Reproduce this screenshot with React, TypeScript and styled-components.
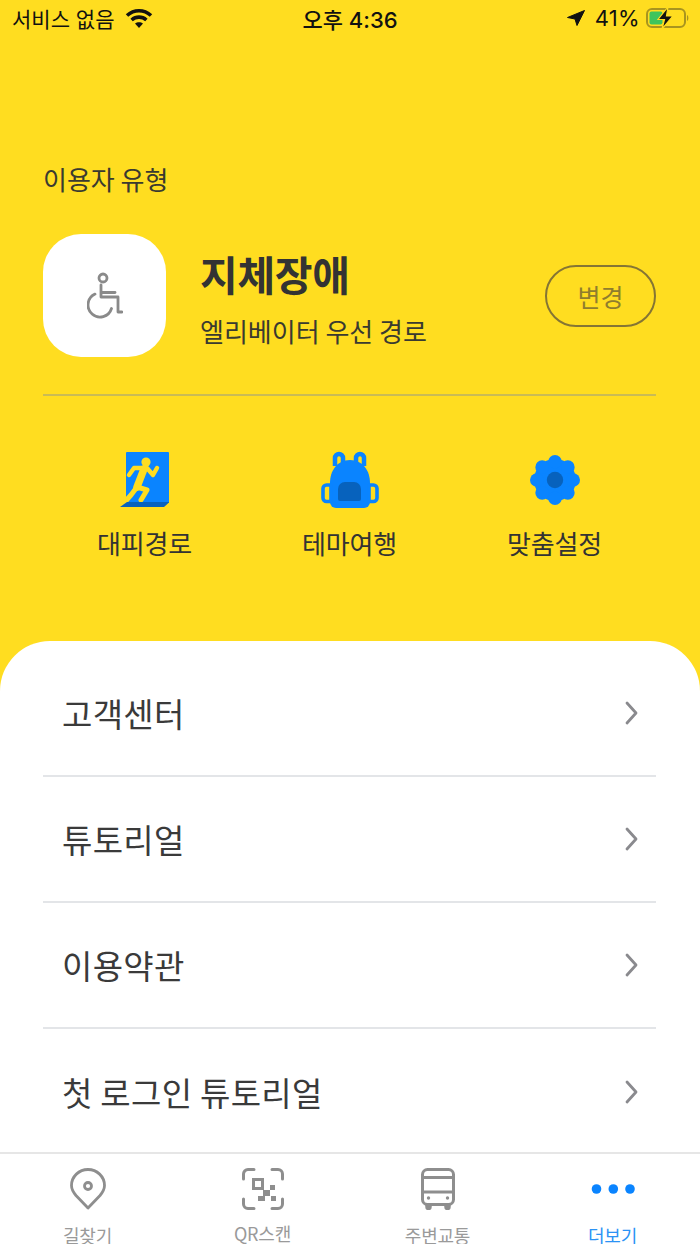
import React from "react";
import styled, { createGlobalStyle } from "styled-components";

const Global = createGlobalStyle`
  html, body { margin: 0; padding: 0; background: #fff; }
  * { box-sizing: border-box; }
  body { font-family: "Noto Sans CJK KR", "Noto Sans", sans-serif; }
`;

const Screen = styled.div`
  width: 700px;
  height: 1244px;
  display: flex;
  flex-direction: column;
  overflow: hidden;
  background: #ffdd20;
  color: #333;
`;

const StatusBar = styled.div`
  height: 40px;
  flex: none;
  display: grid;
  grid-template-columns: 1fr auto 1fr;
  align-items: center;
  padding: 0 10px 4px 12px;
  font-family: "Inter", "Noto Sans CJK KR", sans-serif;
  font-size: 21px;
  color: #111;
`;

const StatusLeft = styled.div`
  display: flex;
  align-items: center;
  gap: 10px;
`;

const StatusTime = styled.div`
  font-size: 22px;
  font-weight: 500;
  margin-left: -2px;
`;

const StatusRight = styled.div`
  display: flex;
  align-items: center;
  justify-content: flex-end;
  gap: 10px;
`;

const BatteryPercent = styled.span`
  font-size: 22px;
  letter-spacing: 0.3px;
  margin-right: -4px;
`;

const Hero = styled.section`
  flex: none;
  height: 601px;
  padding: 121px 44px 0 43px;
  display: flex;
  flex-direction: column;
`;

const Caption = styled.div`
  font-size: 26px;
  line-height: 36px;
  color: #3a3a30;
`;

const ProfileRow = styled.div`
  margin-top: 37px;
  padding-bottom: 37px;
  display: flex;
  align-items: center;
  border-bottom: 2px solid #c9bb55;
`;

const AvatarTile = styled.div`
  width: 123px;
  height: 123px;
  flex: none;
  border-radius: 38px;
  background: #fff;
  display: flex;
  align-items: center;
  justify-content: center;
`;

const ProfileText = styled.div`
  margin-left: 34px;
  padding-top: 2px;
  flex: 1;
  display: flex;
  flex-direction: column;
`;

const ProfileName = styled.div`
  font-size: 41px;
  line-height: 56px;
  font-weight: 700;
  letter-spacing: -0.3px;
  color: #333;
`;

const ProfileNote = styled.div`
  margin-top: 12px;
  font-size: 26px;
  line-height: 36px;
  color: #3a3a30;
`;

const ChangeButton = styled.button`
  width: 111px;
  height: 62px;
  padding: 0;
  border: 2px solid #857534;
  border-radius: 31px;
  background: transparent;
  font-family: inherit;
  font-size: 25px;
  color: #8f7d2e;
`;

const ActionRow = styled.div`
  margin-top: 55px;
  display: grid;
  grid-template-columns: repeat(3, 205px);
  margin-left: -1px;
`;

const Action = styled.div`
  display: flex;
  flex-direction: column;
  align-items: center;
`;

const ActionIcon = styled.div`
  height: 58px;
  display: flex;
  align-items: center;
`;

const ActionLabel = styled.div`
  margin-top: 16px;
  font-size: 26px;
  line-height: 36px;
  letter-spacing: -0.2px;
  color: #333;
`;

const Sheet = styled.section`
  flex: 1;
  min-height: 0;
  background: #fff;
  border-radius: 50px 50px 0 0;
  padding: 10px 44px 0 43px;
  overflow: hidden;
`;

const MenuRow = styled.div`
  height: 126px;
  display: flex;
  align-items: center;
  justify-content: space-between;
  padding: 0 18px 0 19px;
  border-bottom: 2px solid #e3e5e8;
  font-size: 33px;
  letter-spacing: 0.3px;
  color: #3a3a3a;
  &:last-child { border-bottom: none; }
`;

const TabBar = styled.nav`
  flex: none;
  height: 92px;
  background: #fff;
  border-top: 2px solid #e6e6e6;
  display: grid;
  grid-template-columns: repeat(4, 1fr);
`;

const Tab = styled.div<{ $active?: boolean }>`
  display: flex;
  flex-direction: column;
  align-items: center;
  color: ${(p) => (p.$active ? "#2b93f5" : "#9a9a9a")};
  padding-top: 12px;
`;

const TabIcon = styled.div`
  height: 46px;
  display: flex;
  align-items: center;
  justify-content: center;
`;

const TabLabel = styled.div<{ $raised?: boolean }>`
  margin-top: ${(p) => (p.$raised ? "12px" : "14px")};
  font-size: 18px;
  line-height: 18px;
  letter-spacing: -0.2px;
`;

const WifiGlyph = () => (
  <svg width="28" height="21" viewBox="0 0 28 21" fill="none" stroke="#111" strokeWidth="3.6">
    <path d="M2 7.5C9 1.2 19 1.2 26 7.5" />
    <path d="M6.6 12C11 8.2 17 8.2 21.4 12" />
    <path d="M14 20l-4-4.4c2.3-1.8 5.7-1.8 8 0z" fill="#111" stroke="none" />
  </svg>
);

const LocationGlyph = () => (
  <svg width="18" height="16" viewBox="0 0 18 16">
    <path d="M17.500.5 0.500 7.500 8 9l2 6.500z" fill="#111" stroke="#111" strokeLinejoin="round" />
  </svg>
);

const BatteryGlyph = () => (
  <svg width="44" height="22" viewBox="0 0 44 22">
    <rect x="1" y="2" width="38" height="18" rx="5" fill="none" stroke="#a8941f" strokeWidth="2" />
    <rect x="3.500" y="4.500" width="13" height="13" rx="2" fill="#3ec45c" />
    <path d="M41 8c1.800.5 1.800 5.500 0 6z" fill="#a8941f" />
    <path d="M22 0 12 12.500h6.500L16 22l11-13h-6.500z" fill="#111" stroke="#ffdd20" strokeWidth="1.200" />
  </svg>
);

const WheelchairIcon = () => (
  <svg width="36" height="48" viewBox="0 0 36 48" fill="none" stroke="#8a8a8a" strokeWidth="2.800" strokeLinecap="round" strokeLinejoin="round">
    <circle cx="16" cy="6" r="4" />
    <path d="M14 13v12h17v15h4" />
    <path d="M15 20.500h13" />
    <path d="M8 22.100A12 12 0 1 0 24.500 36.500" />
  </svg>
);

const ExitIcon = () => (
  <svg width="50" height="58" viewBox="0 0 50 58">
    <path d="M6 2a1 1 0 0 1 1-1h41a1 1 0 0 1 1 1v50H6z" fill="#0a84ff" />
    <circle cx="26" cy="11" r="4.600" fill="#ffdd20" />
    <g fill="none" stroke="#ffdd20" strokeLinecap="round" strokeLinejoin="round">
      <path d="M9 24l5-7h10M27 17l6 7 4-7" strokeWidth="4.400" />
      <path d="M24 18l-7 18" strokeWidth="7.500" />
      <path d="M17 36l10 3-6 10M17 36l-6 8-8 9" strokeWidth="5" />
    </g>
    <path d="M7 51h42v.5L44 56H0z" fill="#0762bd" />
  </svg>
);

const BackpackIcon = () => (
  <svg width="58" height="58" viewBox="0 0 58 58">
    <path d="M14 15V7a4 4 0 0 1 8 0v8M35 15V7a4 4 0 0 1 8 0v8" fill="none" stroke="#0a84ff" strokeWidth="4.500" />
    <path d="M29 9C16 9 9 20 9 32v19a6 6 0 0 0 6 6h28a6 6 0 0 0 6-6V32C49 20 42 9 29 9z" fill="#0a84ff" />
    <path d="M10 34H5.500A3.500 3.500 0 0 0 2 37.500V47a3.500 3.500 0 0 0 3.500 3.500H10zM48 34h4.500a3.500 3.500 0 0 1 3.500 3.500V47a3.500 3.500 0 0 1-3.500 3.500H48z" fill="#ffdd20" stroke="#0a84ff" strokeWidth="3.600" />
    <path d="M17 38a7 7 0 0 1 7-7h9a7 7 0 0 1 7 7v10a2 2 0 0 1-2 2H19a2 2 0 0 1-2-2z" fill="#0762bd" />
  </svg>
);

const GearIcon = () => (
  <svg width="52" height="52" viewBox="0 0 52 52">
    <g fill="#0a84ff">
      <circle cx="26" cy="26" r="21" />
      {[0, 45, 90, 135, 180, 225, 270, 315].map((a) => (
        <circle key={a} cx="26" cy="7.800" r="6.800" transform={`rotate(${a} 26 26)`} />
      ))}
    </g>
    <circle cx="26" cy="26" r="8.200" fill="#0762bd" />
  </svg>
);

const ChevronIcon = () => (
  <svg width="13" height="24" viewBox="0 0 13 24" fill="none" stroke="#8a8a8e" strokeWidth="2.800" strokeLinecap="round" strokeLinejoin="round">
    <path d="M2 2l9 10-9 10" />
  </svg>
);

const PinIcon = () => (
  <svg width="36" height="42" viewBox="0 0 36 42" fill="none" stroke="#8e8e8e" strokeWidth="2.800" strokeLinejoin="round">
    <path d="M18 40 6 27.500C3.500 24.500 1.500 21 1.500 17.500 1.500 8.500 9 1.500 18 1.500s16.500 7 16.500 16c0 3.500-2 7-4.500 10z" />
    <circle cx="18" cy="18" r="3.500" />
  </svg>
);

const QrIcon = () => (
  <svg width="42" height="42" viewBox="0 0 42 42" fill="none" stroke="#8e8e8e" strokeWidth="3" strokeLinecap="round">
    <path d="M1.500 11V6a4.500 4.500 0 0 1 4.500-4.500h6M30 1.500h6A4.500 4.500 0 0 1 40.500 6v5M40.500 31v5a4.500 4.500 0 0 1-4.500 4.500h-6M12 40.500H6A4.500 4.500 0 0 1 1.500 36v-5" />
    <rect x="11.500" y="11.500" width="9" height="9" strokeWidth="3" strokeLinecap="butt" />
    <g fill="#8e8e8e" stroke="none">
      <rect x="28" y="17" width="5" height="5" />
      <rect x="21" y="22" width="7" height="6" />
      <rect x="16" y="28" width="7" height="5" />
      <rect x="29" y="28" width="5" height="5" />
    </g>
  </svg>
);

const BusIcon = () => (
  <svg width="34" height="42" viewBox="0 0 34 42" fill="none" stroke="#8e8e8e" strokeWidth="3">
    <rect x="1.500" y="1.500" width="31" height="35" rx="5" />
    <path d="M1.500 9.500h31M1.500 24h31" />
    <path d="M5 37v2a2.500 2.500 0 0 0 5 0v-2M24 37v2a2.500 2.500 0 0 0 5 0v-2" fill="#8e8e8e" strokeWidth="1.500" />
    <circle cx="7.500" cy="30" r="1.700" fill="#8e8e8e" stroke="none" />
    <circle cx="26.500" cy="30" r="1.700" fill="#8e8e8e" stroke="none" />
  </svg>
);

const DotsIcon = () => (
  <svg width="44" height="12" viewBox="0 0 44 12" fill="#0a84ff">
    <circle cx="5.500" cy="6" r="4.800" />
    <circle cx="22.300" cy="6" r="4.800" />
    <circle cx="39" cy="6" r="4.800" />
  </svg>
);

const menuItems = ["고객센터", "튜토리얼", "이용약관", "첫 로그인 튜토리얼"];

export default function App() {
  return (
    <Screen>
      <Global />
      <StatusBar>
        <StatusLeft>
          <span>서비스 없음</span>
          <WifiGlyph />
        </StatusLeft>
        <StatusTime>오후 4:36</StatusTime>
        <StatusRight>
          <LocationGlyph />
          <BatteryPercent>41%</BatteryPercent>
          <BatteryGlyph />
        </StatusRight>
      </StatusBar>
      <Hero>
        <Caption>이용자 유형</Caption>
        <ProfileRow>
          <AvatarTile>
            <WheelchairIcon />
          </AvatarTile>
          <ProfileText>
            <ProfileName>지체장애</ProfileName>
            <ProfileNote>엘리베이터 우선 경로</ProfileNote>
          </ProfileText>
          <ChangeButton>변경</ChangeButton>
        </ProfileRow>
        <ActionRow>
          <Action>
            <ActionIcon><ExitIcon /></ActionIcon>
            <ActionLabel>대피경로</ActionLabel>
          </Action>
          <Action>
            <ActionIcon><BackpackIcon /></ActionIcon>
            <ActionLabel>테마여행</ActionLabel>
          </Action>
          <Action>
            <ActionIcon><GearIcon /></ActionIcon>
            <ActionLabel>맞춤설정</ActionLabel>
          </Action>
        </ActionRow>
      </Hero>
      <Sheet>
        {menuItems.map((item) => (
          <MenuRow key={item}>
            <span>{item}</span>
            <ChevronIcon />
          </MenuRow>
        ))}
      </Sheet>
      <TabBar>
        <Tab>
          <TabIcon><PinIcon /></TabIcon>
          <TabLabel>길찾기</TabLabel>
        </Tab>
        <Tab>
          <TabIcon><QrIcon /></TabIcon>
          <TabLabel $raised>QR스캔</TabLabel>
        </Tab>
        <Tab>
          <TabIcon><BusIcon /></TabIcon>
          <TabLabel>주변교통</TabLabel>
        </Tab>
        <Tab $active>
          <TabIcon><DotsIcon /></TabIcon>
          <TabLabel>더보기</TabLabel>
        </Tab>
      </TabBar>
    </Screen>
  );
}
